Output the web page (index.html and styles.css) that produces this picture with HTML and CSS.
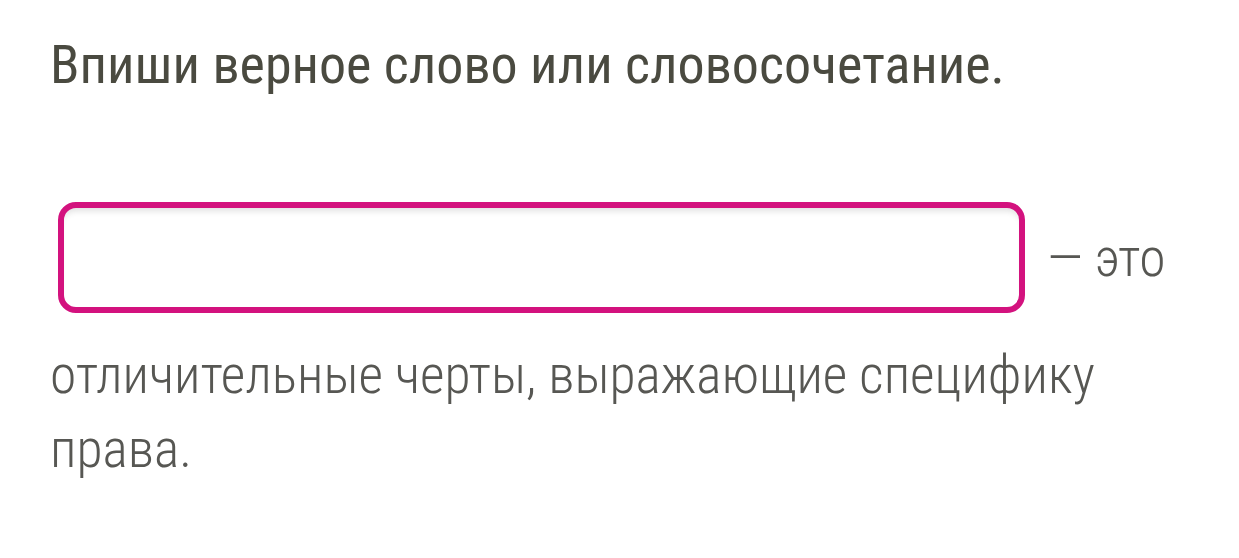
FILE: index.html
```html
<!DOCTYPE html>
<html lang="ru">
<head>
    <meta charset="UTF-8">
    <meta name="viewport" content="width=device-width, initial-scale=1.0">
    <title>Впиши верное слово</title>
    <link rel="stylesheet" href="styles.css">
</head>
<body>
    <div class="task">
        <h1 class="task-title">Впиши верное слово или словосочетание.</h1>
        <p class="task-text">
            <input class="task-input" type="text" aria-label="Ответ">
            — это отличительные черты, выражающие специфику права.
        </p>
    </div>
</body>
</html>
```
FILE: styles.css
```css
body {
    margin: 0;
    background-color: #fff;
    font-family: "Roboto Condensed", Roboto, sans-serif;
}

.task {
    padding: 0 50px;
}

.task-title {
    margin: 33px 0 0;
    font-size: 54px;
    font-weight: 400;
    line-height: 1.2;
    color: #4a4a40;
}

.task-text {
    margin: 88px 0 0;
    font-size: 53.5px;
    font-weight: 300;
    line-height: 74px;
    color: #575753;
}

.task-input {
    box-sizing: border-box;
    width: 967px;
    height: 111px;
    margin: 16px 10px 25px 8px;
    vertical-align: middle;
    border: 6px solid #d3127e;
    border-radius: 18px;
    box-shadow: inset 0 7px 6px -4px rgba(0, 0, 0, 0.12);
    background: #fff;
    outline: none;
}
```
